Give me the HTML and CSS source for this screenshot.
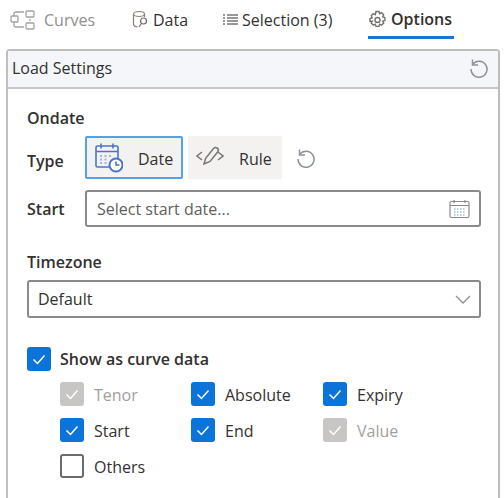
FILE: index.html
```html
<!DOCTYPE html>
<html lang="en">
<head>
<meta charset="utf-8">
<title>Load Settings</title>
<link rel="stylesheet" href="styles.css">
</head>
<body>
<nav class="tabs">
  <div class="tab tab-curves">
    <svg class="ti" width="26" height="24" viewBox="0 0 26 24" fill="none" stroke="#a3a3a3" stroke-width="1.3"><rect x="1" y="8" width="7" height="6" rx="1"/><rect x="16" y="3" width="8" height="6" rx="1"/><rect x="16" y="15" width="8" height="6" rx="1"/><path d="M4 8V6q0-2 2-2h8M4 14v3q0 2 2 2h8M20 11v2"/></svg>
    <span>Curves</span>
  </div>
  <div class="tab tab-data">
    <svg class="ti" width="18" height="20" viewBox="0 0 18 20" fill="none" stroke="#8a7f78" stroke-width="1.2"><ellipse cx="7" cy="4" rx="5.500" ry="2.500"/><path d="M1.500 4v10q0 2.500 4 3M12.500 4v3"/><circle cx="11.500" cy="11" r="3" stroke="#6a6a6a"/><path d="M9.500 13.500L7 17" stroke="#6a6a6a"/></svg>
    <span>Data</span>
  </div>
  <div class="tab tab-selection">
    <svg class="ti" width="16" height="14" viewBox="0 0 16 14" fill="none" stroke="#777" stroke-width="1.300"><path d="M5 2h11M5 5h11M5 8h11M5 11h11M1 2h2M1 5h2M1 8h2M1 11h2"/></svg>
    <span>Selection (3)</span>
  </div>
  <div class="tab tab-options">
    <svg class="ti" width="19" height="19" viewBox="0 0 19 19" fill="none" stroke="#77716c" stroke-width="1.400"><path d="M8 1.500h3l.6 2.200 2-1 2.100 2.100-1 2 2.200.7v3l-2.200.6 1 2-2.100 2.100-2-1-.6 2.200H8l-.7-2.200-2 1-2.100-2.100 1-2L2 11.500v-3l2.200-.7-1-2 2.100-2.100 2 1z"/><circle cx="9.500" cy="10" r="2.500"/></svg>
    <span>Options</span>
  </div>
</nav>

<section class="panel">
  <header class="panel-head">
    <span>Load Settings</span>
    <svg class="undo" width="20" height="20" viewBox="0 0 20 20" fill="none" stroke="#8d9298" stroke-width="1.500"><path d="M3.500 1.500V7H9"/><path d="M3.700 6.300A8 8 0 1 1 2 11"/></svg>
  </header>
  <div class="panel-body">
    <h3 class="title">Ondate</h3>
    <div class="row row-type">
      <label class="lbl">Type</label>
      <button class="seg seg-on">
        <svg width="28" height="30" viewBox="0 0 28 30" fill="none" stroke="#4a74c9" stroke-width="1.600"><rect x="1" y="3" width="22" height="21" rx="1.500"/><path d="M1 8.500h22M6 .5v5M18 .5v5"/><path d="M5 13h2M9.500 13h2M14 13h2M5 16.500h2M9.500 16.500h2M5 20h2M9.500 20h2" stroke-width="2" stroke="#a0b2e0"/><circle cx="21" cy="22" r="6.500" fill="#fff" stroke-width="2"/><path d="M21 18.500V22h3.500"/></svg>
        <span>Date</span>
      </button>
      <button class="seg seg-off">
        <svg class="rule-icon" width="28" height="20" viewBox="0 0 28 20" fill="none" stroke="#777" stroke-width="1.500"><path d="M6 6l-5 4 5 4M22 6l5 4-5 4"/><path d="M8 18l1.500-5.500 8-10q1.500-1.500 3.500-.5t1 3.500l-8 10z"/></svg>
        <span>Rule</span>
      </button>
      <svg class="undo undo-type" width="20" height="20" viewBox="0 0 20 20" fill="none" stroke="#8d9298" stroke-width="1.500"><path d="M3.500 1.500V7H9"/><path d="M3.700 6.300A8 8 0 1 1 2 11"/></svg>
    </div>
    <div class="row row-start">
      <label class="lbl">Start</label>
      <div class="field field-date">
        <span class="ph">Select start date...</span>
        <svg width="21" height="20" viewBox="0 0 21 20" fill="none" stroke="#8a8a8a" stroke-width="1.200"><rect x="1" y="2.500" width="19" height="16" rx="1.500"/><path d="M1 6.500h19M5 1v3M16 1v3"/><path d="M5 10h11M5 13h11M5 16h11" stroke="#9cc3e0" stroke-width="1.500" stroke-dasharray="1.500 1.500"/></svg>
      </div>
    </div>
    <h3 class="title title-tz">Timezone</h3>
    <div class="field field-select">
      <span>Default</span>
      <svg width="16" height="9" viewBox="0 0 16 9" fill="none" stroke="#8f8f8f" stroke-width="1.300"><path d="M1 1l7 7 7-7"/></svg>
    </div>
    <div class="check check-main">
      <span class="box on"><svg width="14" height="11" viewBox="0 0 14 11" fill="none" stroke="#fff" stroke-width="1.500"><path d="M1.500 5.500l4 4 7-8"/></svg></span>
      <span class="main-label">Show as curve data</span>
    </div>
    <div class="check-grid">
      <div class="check off"><span class="box dis"><svg width="14" height="11" viewBox="0 0 14 11" fill="none" stroke="#fff" stroke-width="1.500"><path d="M1.500 5.500l4 4 7-8"/></svg></span><span>Tenor</span></div>
      <div class="check"><span class="box on"><svg width="14" height="11" viewBox="0 0 14 11" fill="none" stroke="#fff" stroke-width="1.500"><path d="M1.500 5.500l4 4 7-8"/></svg></span><span>Absolute</span></div>
      <div class="check"><span class="box on"><svg width="14" height="11" viewBox="0 0 14 11" fill="none" stroke="#fff" stroke-width="1.500"><path d="M1.500 5.500l4 4 7-8"/></svg></span><span>Expiry</span></div>
      <div class="check"><span class="box on"><svg width="14" height="11" viewBox="0 0 14 11" fill="none" stroke="#fff" stroke-width="1.500"><path d="M1.500 5.500l4 4 7-8"/></svg></span><span>Start</span></div>
      <div class="check"><span class="box on"><svg width="14" height="11" viewBox="0 0 14 11" fill="none" stroke="#fff" stroke-width="1.500"><path d="M1.500 5.500l4 4 7-8"/></svg></span><span>End</span></div>
      <div class="check off"><span class="box dis"><svg width="14" height="11" viewBox="0 0 14 11" fill="none" stroke="#fff" stroke-width="1.500"><path d="M1.500 5.500l4 4 7-8"/></svg></span><span>Value</span></div>
      <div class="check"><span class="box empty"></span><span>Others</span></div>
    </div>
  </div>
</section>
</body>
</html>
```

FILE: styles.css
```css
* { box-sizing: border-box; }
html, body { margin: 0; height: 100%; }
body {
  width: 504px;
  height: 498px;
  overflow: hidden;
  background: #fff;
  color: #323130;
  font-family: "Open Sans", "Noto Sans", sans-serif;
  font-size: 16px;
}
.tabs {
  display: flex;
  height: 49px;
  padding-left: 10px;
  align-items: flex-start;
}
.tab {
  display: flex;
  align-items: center;
  height: 39px;
  padding: 2px 0;
  gap: 4px;
  white-space: nowrap;
}
.tab-curves { color: #8f8f8f; gap: 8px; width: 122px; }
.tab-data { width: 90px; gap: 3px; }
.tab-selection { width: 146px; gap: 4px; }
.tab-options {
  font-weight: 600;
  border-bottom: 3px solid #1976d2;
  width: 86px;
  padding-bottom: 0;
}
.panel {
  margin: 0 4px 0 6px;
  height: 449px;
  border: 2px solid #bdbdbd;
  border-bottom: 0;
  border-radius: 4px 4px 0 0;
}
.panel-head {
  display: flex;
  justify-content: space-between;
  align-items: center;
  height: 38px;
  padding: 0 9px 2px 4px;
  background: #f5f6fa;
  border-bottom: 2px solid #c6c6c6;
}
.panel-body { padding: 19px 17px 0 19px; }
.title { margin: 0; font-size: 16px; font-weight: 600; line-height: 20px; }
.row { display: flex; align-items: center; }
.lbl { width: 58px; font-weight: 600; }
.row-type { margin-top: 8px; height: 43px; }
.row-type .lbl { padding-top: 6px; }
.row-start .lbl { padding-top: 1px; }
.seg {
  display: flex;
  align-items: center;
  height: 43px;
  padding: 0 0 0 8px;
  border: 0;
  background: #f3f2f1;
  color: #323130;
  font: inherit;
}
.seg svg { flex: none; }
.seg span { padding-top: 2px; }
.seg-on { width: 98px; gap: 15px; border: 2px solid #56a0e8; border-radius: 2px; }
.seg-off { width: 94px; margin-left: 5px; gap: 15px; }
.rule-icon { margin-bottom: 4px; }
.undo-type { margin-left: 14px; }
.row-start { margin-top: 11px; }
.field {
  display: flex;
  justify-content: space-between;
  align-items: center;
  background: #fff;
  border: 2px solid #8a8a8a;
  border-radius: 3px;
}
.field-date { width: 396px; height: 37px; padding: 0 9px 0 10px; }
.ph { color: #605e5c; }
.title-tz { margin-top: 25px; }
.field-select { width: 454px; height: 38px; margin-top: 8px; padding: 0 8px 0 9px; }
.check { display: flex; align-items: center; gap: 10px; }
.check-main { margin-top: 29px; gap: 9px; font-weight: 600; }
.check-grid .check span:last-child:not(.box) { padding-top: 2px; }
.box {
  flex: none;
  display: flex;
  align-items: center;
  justify-content: center;
  width: 24px;
  height: 24px;
  border-radius: 3px;
}
.on { background: #0a74d8; }
.dis { background: #c8c6c4; }
.empty { border: 2px solid #6b6b6b; }
.off { color: #a19f9d; }
.check-grid {
  display: grid;
  grid-template-columns: 131px 132px 1fr;
  row-gap: 12px;
  margin: 11px 0 0 33px;
}
```
